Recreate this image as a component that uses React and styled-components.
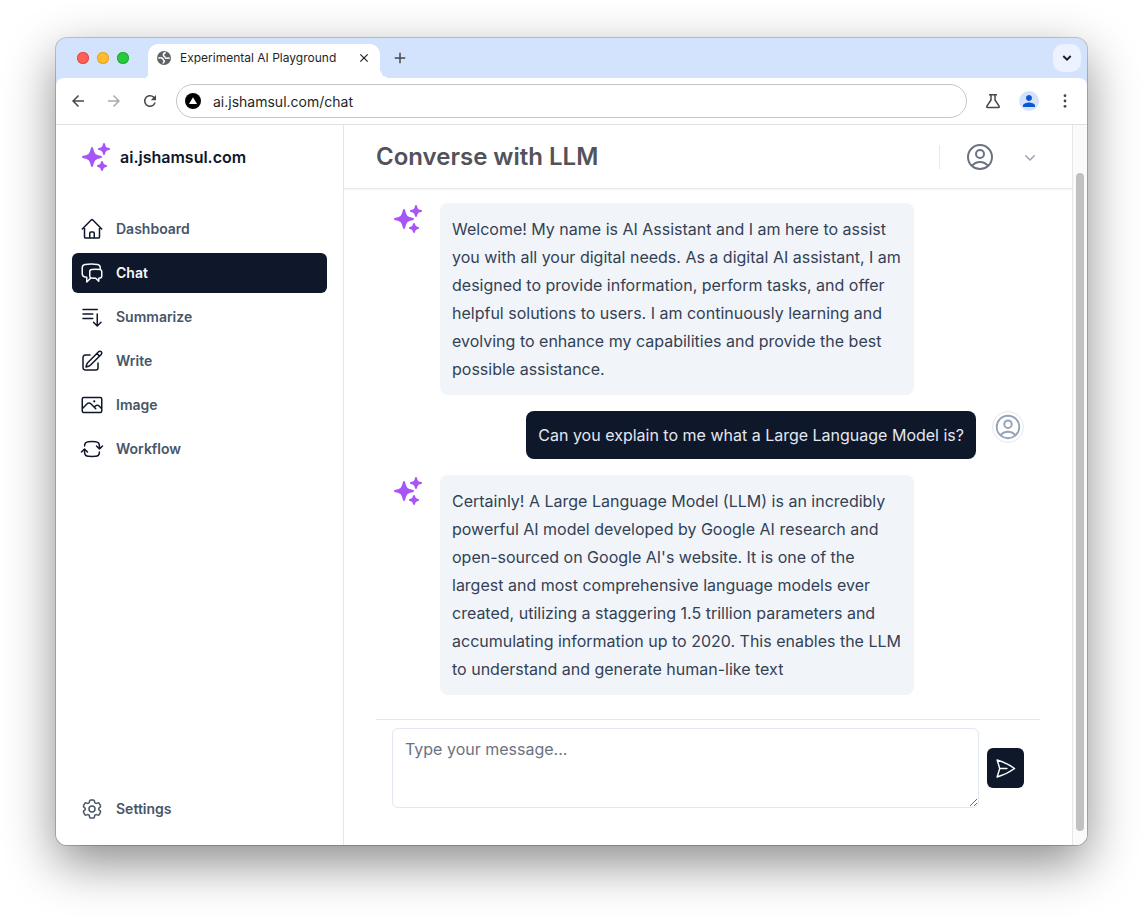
import React from "react";
import styled, { createGlobalStyle, css } from "styled-components";
import {
  HiSparkles,
  HiOutlineHome,
  HiOutlineChatBubbleLeftRight,
  HiOutlineBarsArrowDown,
  HiOutlinePencilSquare,
  HiOutlinePhoto,
  HiOutlineArrowPathRoundedSquare,
  HiOutlineCog6Tooth,
  HiOutlineUserCircle,
  HiOutlinePaperAirplane,
  HiMiniChevronDown,
} from "react-icons/hi2";
import {
  MdAdd,
  MdArrowBack,
  MdArrowForward,
  MdClose,
  MdPerson,
  MdRefresh,
} from "react-icons/md";

const GlobalStyle = createGlobalStyle`
  *, *::before, *::after { box-sizing: border-box; }
  body {
    margin: 0;
    background: #fff;
    font-family: Inter, "Liberation Sans", sans-serif;
    color: #0f172a;
  }
  button { font: inherit; color: inherit; border: 0; padding: 0; background: none; cursor: pointer; }
  a { color: inherit; text-decoration: none; }
  svg { display: block; flex: none; }
`;

const Desktop = styled.div`
  min-height: 100vh;
  padding: 38px 56px 74px;
  display: flex;
`;

const Window = styled.div`
  flex: 1;
  min-width: 0;
  display: flex;
  flex-direction: column;
  overflow: hidden;
  border-radius: 11px;
  background: #d3e2fd;
  box-shadow: 0 0 0 1px rgba(0, 0, 0, 0.2), 0 18px 50px rgba(0, 0, 0, 0.46);
`;

const TabStrip = styled.div`
  height: 40px;
  display: flex;
  align-items: center;
  padding: 0 6px 0 21px;
`;

const TrafficLights = styled.div`
  display: flex;
  gap: 8px;
  margin-right: 19px;
`;

const Light = styled.button`
  width: 12px;
  height: 12px;
  border-radius: 50%;
  background: ${(p) => p.$color};
  box-shadow: inset 0 0 0 1px ${(p) => p.$edge};
`;

const Tab = styled.div`
  position: relative;
  align-self: flex-end;
  width: 232px;
  height: 34px;
  padding: 0 7px 6px 8px;
  display: flex;
  align-items: center;
  border-radius: 10px 10px 0 0;
  background: #fff;
  font-size: 12px;
  line-height: 16px;
  color: #1f1f1f;

  &::before,
  &::after {
    content: "";
    position: absolute;
    bottom: 0;
  }
  &::before {
    right: 100%;
    width: 4px;
    height: 4px;
    background: radial-gradient(circle at 0 0, transparent 4px, #fff 4px);
  }
  &::after {
    left: 100%;
    width: 10px;
    height: 10px;
    background: radial-gradient(circle at 100% 0, transparent 10px, #fff 10px);
  }
`;

const TabTitle = styled.span`
  flex: 1;
  margin-left: 8px;
  white-space: nowrap;
`;

const ChromeButton = styled.button`
  width: ${(p) => p.$size || 20}px;
  height: ${(p) => p.$size || 20}px;
  display: grid;
  place-items: center;
  border-radius: ${(p) => p.$radius || 0}px;
  background: ${(p) => p.$bg || "none"};
  color: ${(p) => p.$color || "#474747"};
`;

const NewTab = styled(ChromeButton)`
  margin-left: 10px;
`;

const TabSearch = styled(ChromeButton)`
  margin-left: auto;
`;

const Toolbar = styled.div`
  height: 47px;
  display: flex;
  align-items: center;
  gap: 16px;
  padding: 0 12px;
  border-radius: 8px 8px 0 0;
  border-bottom: 1px solid #e0e0e0;
  background: #fff;
`;

const AddressBar = styled.label`
  flex: 1;
  height: 34px;
  padding: 0 8px;
  display: flex;
  align-items: center;
  gap: 12px;
  border: 1px solid #c4c6c5;
  border-radius: 17px;
`;

const AddressInput = styled.input`
  flex: 1;
  min-width: 0;
  height: 20px;
  padding: 0;
  border: 0;
  outline: 0;
  background: none;
  font: 14px Inter, "Liberation Sans", sans-serif;
  color: #1f1f1f;
`;

const Page = styled.div`
  flex: 1;
  display: flex;
  background: #fff;
`;

const Sidebar = styled.aside`
  flex: none;
  width: 288px;
  padding: 16px;
  display: flex;
  flex-direction: column;
  border-right: 1px solid #e5e7eb;
`;

const Brand = styled.a`
  height: 32px;
  padding-left: 8px;
  margin-bottom: 36px;
  display: flex;
  align-items: center;
  gap: 8px;
  font-size: 16px;
  font-weight: 600;

  svg { color: #a855f7; }
`;

const Nav = styled.nav`
  flex: 1;
  display: flex;
  flex-direction: column;
  gap: 4px;
`;

const NavLink = styled.a`
  height: 40px;
  padding: 0 8px;
  display: flex;
  align-items: center;
  gap: 12px;
  border-radius: 6px;
  font-size: 14px;
  line-height: 20px;
  font-weight: 600;
  color: #475569;

  svg { color: ${(p) => (p.$muted ? "#475569" : "#0f172a")}; }

  ${(p) =>
    p.$active &&
    css`
      background: #0f172a;
      color: #f8fafc;
      svg { color: #f8fafc; }
    `}
`;

const Main = styled.main`
  flex: 1;
  min-width: 0;
  display: flex;
  flex-direction: column;
`;

const Header = styled.header`
  height: 64px;
  padding: 0 32px;
  display: flex;
  align-items: center;
  border-bottom: 1px solid #e5e7eb;
  box-shadow: 0 1px 2px rgba(0, 0, 0, 0.05);
`;

const Title = styled.h1`
  flex: 1;
  margin: 0;
  font-size: 24px;
  line-height: 32px;
  font-weight: 600;
  color: #52525b;
`;

const UserMenu = styled.button`
  display: flex;
  align-items: center;
  gap: 24px;
  color: #9ca3af;

  &::before {
    content: "";
    width: 1px;
    height: 24px;
    background: #e5e7eb;
  }
`;

const UserPicture = styled(HiOutlineUserCircle)`
  color: #6b7280;
`;

const Messages = styled.div`
  padding: 14px 48px 24px;
  display: flex;
  flex-direction: column;
  gap: 16px;
`;

const Message = styled.article`
  display: flex;
  align-items: flex-start;
  gap: 16px;
  flex-direction: ${(p) => (p.$mine ? "row-reverse" : "row")};

  > svg { color: #a855f7; }
`;

const Bubble = styled.p`
  max-width: 75%;
  margin: 0;
  padding: 12px;
  border-radius: 8px;
  font-size: 16px;
  line-height: ${(p) => (p.$mine ? 24 : 28)}px;
  color: ${(p) => (p.$mine ? "#e2e8f0" : "#334155")};
  background: ${(p) => (p.$mine ? "#0f172a" : "#f1f5f9")};
`;

const Avatar = styled.span`
  flex: none;
  width: 32px;
  height: 32px;
  display: grid;
  place-items: center;
  border: 1px solid #e2e8f0;
  border-radius: 50%;
  color: #94a3b8;
`;

const Composer = styled.form`
  margin: 0 32px;
  padding: 8px 16px 36px;
  display: flex;
  align-items: center;
  gap: 8px;
  border-top: 1px solid #e5e7eb;
`;

const MessageInput = styled.textarea`
  flex: 1;
  min-width: 0;
  height: 80px;
  padding: 8px 12px;
  border: 1px solid #e2e8f0;
  border-radius: 6px;
  background: #fff;
  font: 16px/24px Inter, "Liberation Sans", sans-serif;
  color: #0f172a;
  resize: vertical;

  &::placeholder { color: #6b7280; }
`;

const SendButton = styled.button`
  width: 37px;
  height: 40px;
  display: grid;
  place-items: center;
  border-radius: 6px;
  background: #0f172a;
  color: #f8fafc;
`;

const ScrollTrack = styled.div`
  flex: none;
  width: 15px;
  padding: 48px 3px 14px;
  display: flex;
  border-left: 1px solid #e8e8e8;
  background: #fafafa;
`;

const ScrollThumb = styled.div`
  width: 8px;
  border-radius: 4px;
  background: #c1c1c1;
`;

const LINKS = [
  { label: "Dashboard", Icon: HiOutlineHome },
  { label: "Chat", Icon: HiOutlineChatBubbleLeftRight, active: true },
  { label: "Summarize", Icon: HiOutlineBarsArrowDown },
  { label: "Write", Icon: HiOutlinePencilSquare },
  { label: "Image", Icon: HiOutlinePhoto },
  { label: "Workflow", Icon: HiOutlineArrowPathRoundedSquare },
];

const MESSAGES = [
  {
    text: "Welcome! My name is AI Assistant and I am here to assist you with all your digital needs. As a digital AI assistant, I am designed to provide information, perform tasks, and offer helpful solutions to users. I am continuously learning and evolving to enhance my capabilities and provide the best possible assistance.",
  },
  { mine: true, text: "Can you explain to me what a Large Language Model is?" },
  {
    text: "Certainly! A Large Language Model (LLM) is an incredibly powerful AI model developed by Google AI research and open-sourced on Google AI's website. It is one of the largest and most comprehensive language models ever created, utilizing a staggering 1.5 trillion parameters and accumulating information up to 2020. This enables the LLM to understand and generate human-like text",
  },
];

function GlobeIcon() {
  return (
    <svg width="16" height="16" viewBox="0 0 16 16" aria-hidden="true">
      <circle cx="8" cy="8" r="7" fill="#5f6368" />
      <path
        d="M9.800 2.600C7.800 3 7.200 4 7.400 5.200S9 6.300 9.100 7.300s1.200 1.200 2.300.9 1.900-.2 2.300.3"
        fill="none"
        stroke="#fff"
        strokeWidth="1.500"
      />
      <path d="M2.300 8c1.800-.3 3.700-.2 4.500.6s.2 1.400.9 1.800 1 .9.300 1.600-.9 1.100-.8 1.700" fill="none" stroke="#fff" strokeWidth="1.500" />
    </svg>
  );
}

function SiteIcon() {
  return (
    <svg width="16" height="16" viewBox="0 0 16 16" aria-hidden="true">
      <circle cx="8" cy="8" r="8" fill="#000" />
      <path d="M8 4.2 12 11H4z" fill="#fff" />
    </svg>
  );
}

function FlaskIcon() {
  return (
    <svg width="18" height="18" viewBox="0 0 18 18" fill="none" stroke="#474747" strokeWidth="1.5" strokeLinejoin="round" aria-hidden="true">
      <path d="M5 2.8h8M7 3v5L2.9 14.2q-.6 1.3.7 1.3h10.8q1.3 0 .7-1.3L11 8V3" />
    </svg>
  );
}

function MoreIcon() {
  return (
    <svg width="20" height="20" viewBox="0 0 20 20" fill="#474747" aria-hidden="true">
      <circle cx="10" cy="4.700" r="1.400" />
      <circle cx="10" cy="10" r="1.400" />
      <circle cx="10" cy="15.300" r="1.400" />
    </svg>
  );
}

function TabSearchIcon() {
  return (
    <svg width="12" height="12" viewBox="0 0 12 12" fill="none" stroke="#1f1f1f" strokeWidth="2" aria-hidden="true">
      <path d="m2.3 4 3.7 3.6L9.700 4" />
    </svg>
  );
}

export default function App() {
  return (
    <>
      <GlobalStyle />
      <Desktop>
        <Window>
          <TabStrip>
            <TrafficLights>
              <Light aria-label="Close window" $color="#ff5f57" $edge="#e24b41" />
              <Light aria-label="Minimize window" $color="#febc2e" $edge="#e1a325" />
              <Light aria-label="Zoom window" $color="#28c840" $edge="#1dad2b" />
            </TrafficLights>
            <Tab>
              <GlobeIcon />
              <TabTitle>Experimental AI Playground</TabTitle>
              <ChromeButton aria-label="Close tab" $size={18} $color="#1f1f1f">
                <MdClose size={14} />
              </ChromeButton>
            </Tab>
            <NewTab aria-label="New tab">
              <MdAdd size={18} />
            </NewTab>
            <TabSearch aria-label="Search tabs" $size={28} $radius={10} $bg="#ecf2fe">
              <TabSearchIcon />
            </TabSearch>
          </TabStrip>

          <Toolbar>
            <ChromeButton aria-label="Back"><MdArrowBack size={18} /></ChromeButton>
            <ChromeButton aria-label="Forward" $color="#ababab"><MdArrowForward size={18} /></ChromeButton>
            <ChromeButton aria-label="Reload"><MdRefresh size={18} /></ChromeButton>
            <AddressBar>
              <SiteIcon />
              <AddressInput aria-label="Address" defaultValue="ai.jshamsul.com/chat" />
            </AddressBar>
            <ChromeButton aria-label="Labs"><FlaskIcon /></ChromeButton>
            <ChromeButton aria-label="Profile" $radius={10} $bg="#d3e2fd" $color="#0b57d0">
              <MdPerson size={18} />
            </ChromeButton>
            <ChromeButton aria-label="More"><MoreIcon /></ChromeButton>
          </Toolbar>

          <Page>
            <Sidebar>
              <Brand href="#">
                <HiSparkles size={32} />
                ai.jshamsul.com
              </Brand>
              <Nav>
                {LINKS.map(({ label, Icon, active }) => (
                  <NavLink key={label} href="#" $active={active}>
                    <Icon size={24} />
                    {label}
                  </NavLink>
                ))}
              </Nav>
              <NavLink href="#" $muted>
                <HiOutlineCog6Tooth size={24} />
                Settings
              </NavLink>
            </Sidebar>

            <Main>
              <Header>
                <Title>Converse with LLM</Title>
                <UserMenu aria-label="User menu">
                  <UserPicture size={32} />
                  <HiMiniChevronDown size={20} />
                </UserMenu>
              </Header>
              <Messages>
                {MESSAGES.map(({ mine, text }) => (
                  <Message key={text} $mine={mine}>
                    {mine ? (
                      <Avatar><HiOutlineUserCircle size={30} /></Avatar>
                    ) : (
                      <HiSparkles size={32} />
                    )}
                    <Bubble $mine={mine}>{text}</Bubble>
                  </Message>
                ))}
              </Messages>
              <Composer onSubmit={(e) => e.preventDefault()}>
                <MessageInput aria-label="Message" placeholder="Type your message..." />
                <SendButton aria-label="Send">
                  <HiOutlinePaperAirplane size={23} />
                </SendButton>
              </Composer>
            </Main>

            <ScrollTrack aria-hidden="true">
              <ScrollThumb />
            </ScrollTrack>
          </Page>
        </Window>
      </Desktop>
    </>
  );
}
